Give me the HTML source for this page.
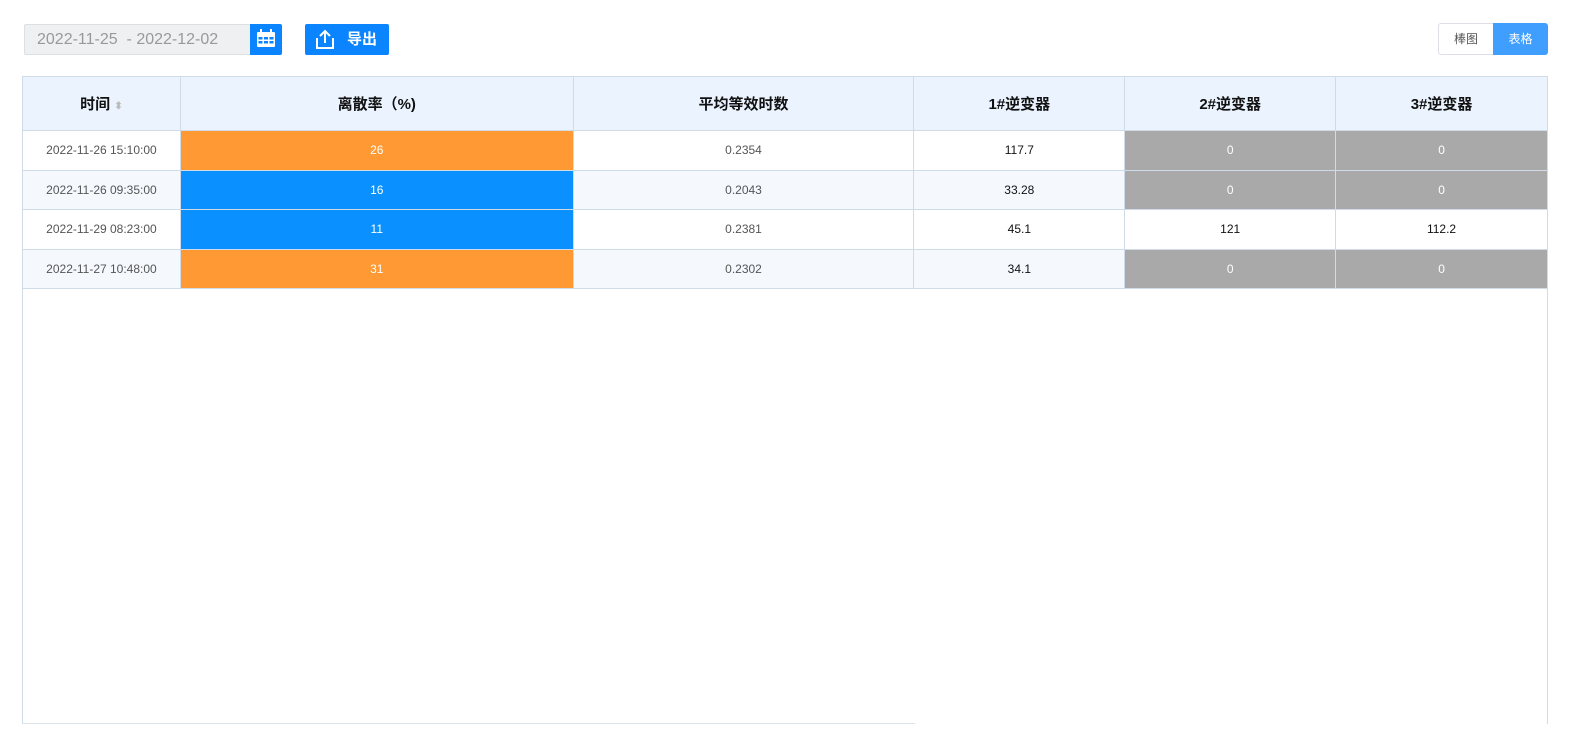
<!DOCTYPE html>
<html><head><meta charset="utf-8"><style>
*{margin:0;padding:0;box-sizing:border-box}
body{width:1586px;height:756px;background:#fff;font-family:"Liberation Sans","Noto Sans CJK SC",sans-serif;position:relative;overflow:hidden}
.date{position:absolute;left:24px;top:24px;width:227px;height:31px;background:#eff0f2;border:1px solid #dcdfe4;border-right:none;border-radius:2px 0 0 2px;color:#999;font-size:16px;line-height:29px;padding-left:12px}
.cal{position:absolute;left:250px;top:24px;width:32px;height:31px;background:#0a84ff;border-radius:0 2px 2px 0}
.exp{position:absolute;left:305px;top:24px;width:84px;height:31px;background:#0a84ff;border-radius:2px;color:#fff;font-size:15px;font-weight:bold;line-height:31px}
.tog{position:absolute;top:23px;height:32px;width:55px;font-size:12px;line-height:30px;text-align:center}
table{position:absolute;left:22px;top:76px;border-collapse:collapse;width:1526px}
td,th{border:1px solid #cfdbe7;text-align:center;font-size:12px;color:#555}
th{height:54px;background:#eaf3fe;color:#111;font-size:15px}
td{height:39.5px}
tr.alt td{background:#f5f9fe}
td.o{background:#ff9933!important;color:#fff}
td.b{background:#0a90ff!important;color:#fff}
td.g{background:#a9a9a9!important;color:#fff}
td.k{color:#111}
.frame{position:absolute;left:22px;top:289px;width:1526px;height:435px;border-left:1px solid #cfdbe7;border-right:1px solid #cfdbe7}
.bot{position:absolute;left:22px;top:723px;width:893px;height:1px;background:#dde3ea}
</style></head><body>
<div class="date">2022-11-25 &nbsp;- 2022-12-02</div>
<div class="cal"><svg width="32" height="31" viewBox="0 0 32 31"><rect x="7" y="8" width="18" height="15" rx="1" fill="#fff"/><rect x="10" y="5" width="2" height="5" fill="#fff"/><rect x="20" y="5" width="2" height="5" fill="#fff"/><g fill="#0a84ff"><rect x="8.5" y="13" width="4" height="2.5"/><rect x="14" y="13" width="4" height="2.5"/><rect x="19.5" y="13" width="4" height="2.5"/><rect x="8.5" y="17" width="4" height="2.5"/><rect x="14" y="17" width="4" height="2.5"/><rect x="19.5" y="17" width="4" height="2.5"/></g></svg></div>
<div class="exp"><svg style="position:absolute;left:9px;top:5px" width="22" height="21" viewBox="0 0 22 21"><path d="M3 9v10h16V9M11 14V2M6 7l5-5 5 5" fill="none" stroke="#fff" stroke-width="2"/></svg><span style="position:absolute;left:42px">导出</span></div>
<div class="tog" style="left:1438px;border:1px solid #dcdfe6;border-right:none;border-radius:3px 0 0 3px;color:#555">棒图</div>
<div class="tog" style="left:1493px;background:#409eff;color:#fff;border-radius:0 3px 3px 0;line-height:32px">表格</div>
<table>
<colgroup><col style="width:158px"><col style="width:393px"><col style="width:341px"><col style="width:211px"><col style="width:211px"><col style="width:212px"></colgroup>
<tr><th>时间 <span style="color:#bbb;font-size:10px">⬍</span></th><th>离散率（%)</th><th>平均等效时数</th><th>1#逆变器</th><th>2#逆变器</th><th>3#逆变器</th></tr>
<tr><td>2022-11-26 15:10:00</td><td class="o">26</td><td>0.2354</td><td class="k">117.7</td><td class="g">0</td><td class="g">0</td></tr>
<tr class="alt"><td>2022-11-26 09:35:00</td><td class="b">16</td><td>0.2043</td><td class="k">33.28</td><td class="g">0</td><td class="g">0</td></tr>
<tr><td>2022-11-29 08:23:00</td><td class="b">11</td><td>0.2381</td><td class="k">45.1</td><td class="k">121</td><td class="k">112.2</td></tr>
<tr class="alt"><td>2022-11-27 10:48:00</td><td class="o">31</td><td>0.2302</td><td class="k">34.1</td><td class="g">0</td><td class="g">0</td></tr>
</table>
<div class="frame"></div><div class="bot"></div>
</body></html>
